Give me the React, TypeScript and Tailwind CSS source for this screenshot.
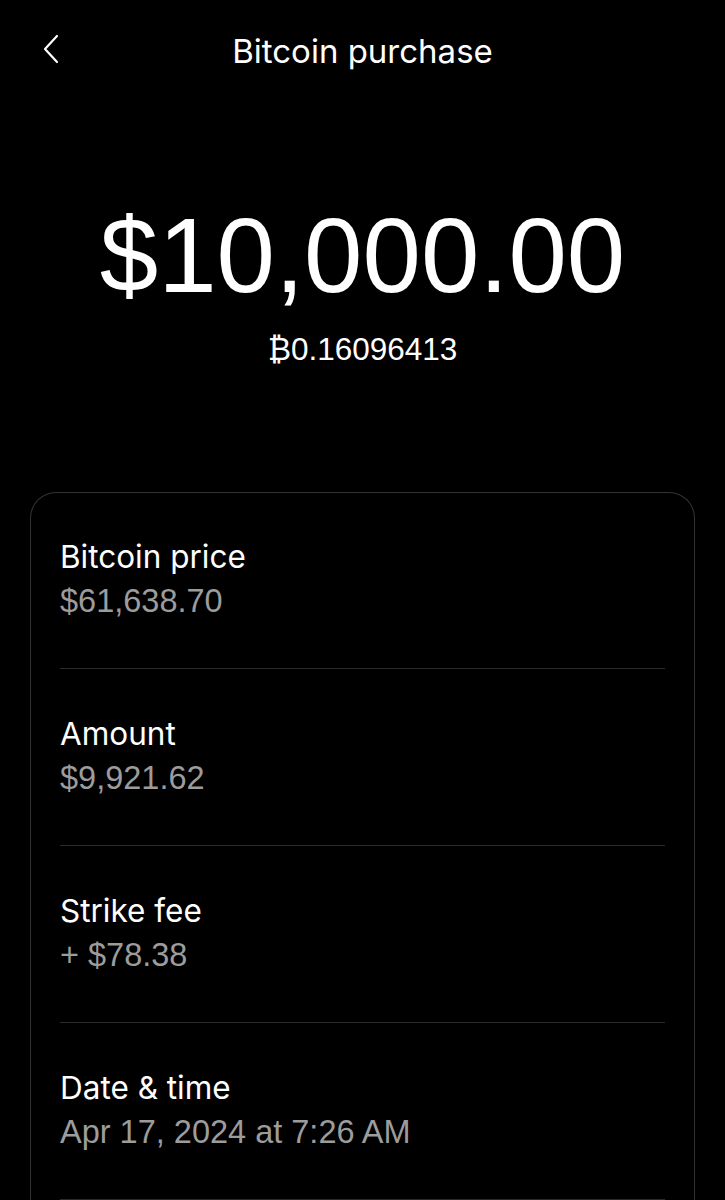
import React from "react";

const rows = [
  { label: "Bitcoin price", value: "$61,638.70" },
  { label: "Amount", value: "$9,921.62" },
  { label: "Strike fee", value: "+ $78.38" },
  { label: "Date & time", value: "Apr 17, 2024 at 7:26 AM" },
];

function BackIcon() {
  return (
    <svg width="18" height="30" viewBox="0 0 18 30" fill="none">
      <path
        d="M15 2 L3 15 L15 28"
        stroke="#ffffff"
        strokeWidth="2.2"
        strokeLinecap="round"
        strokeLinejoin="round"
      />
    </svg>
  );
}

function DetailRow({ label, value }: { label: string; value: string }) {
  return (
    <div className="border-b border-[#2b2b2b] pt-[43px] pb-[45px] first:pt-[42px]">
      <p className="font-['Inter',sans-serif] text-[31.5px] leading-[44px] text-white">
        {label}
      </p>
      <p className="font-['Liberation_Sans',Arial,sans-serif] text-[32.5px] leading-[44px] text-[#9c9c9c]">
        {value}
      </p>
    </div>
  );
}

export default function App() {
  return (
    <div className="h-[1200px] w-full overflow-hidden bg-black text-white">
      <header className="relative flex h-[100px] items-start justify-center pt-[29px]">
        <button
          type="button"
          className="absolute left-[42px] top-[34px] flex items-center"
        >
          <BackIcon />
        </button>
        <h1 className="font-['Inter',sans-serif] text-[33px] leading-[44px] font-normal">
          Bitcoin purchase
        </h1>
      </header>

      <section className="flex flex-col items-center pt-[96px]">
        <p className="font-['Liberation_Sans',Arial,sans-serif] text-[105px] leading-[120px]">
          $10,000.00
        </p>
        <p className="mt-[13px] font-['Liberation_Sans',Arial,sans-serif] text-[31.5px] leading-[40px]">
          ₿0.16096413
        </p>
      </section>

      <div className="mx-[30px] mt-[123px] rounded-t-[26px] border border-b-0 border-[#333333] px-[29px]">
        {rows.map((r) => (
          <DetailRow key={r.label} label={r.label} value={r.value} />
        ))}
      </div>
    </div>
  );
}
